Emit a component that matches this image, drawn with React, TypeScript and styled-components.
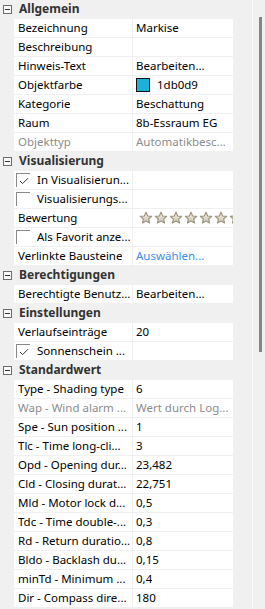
import React from 'react'
import styled, { createGlobalStyle } from 'styled-components'

type RowKind = 'text' | 'check' | 'color' | 'stars' | 'link'

type PropRow = {
  name: string
  value?: string
  kind?: RowKind
  checked?: boolean
  disabled?: boolean
}

type Section = {
  title: string
  rows: Array<PropRow>
}

const sections: Array<Section> = [
  {
    title: 'Allgemein',
    rows: [
      { name: 'Bezeichnung', value: 'Markise' },
      { name: 'Beschreibung', value: '' },
      { name: 'Hinweis-Text', value: 'Bearbeiten...' },
      { name: 'Objektfarbe', value: '1db0d9', kind: 'color' },
      { name: 'Kategorie', value: 'Beschattung' },
      { name: 'Raum', value: '8b-Essraum EG' },
      { name: 'Objekttyp', value: 'Automatikbesc...', disabled: true }
    ]
  },
  {
    title: 'Visualisierung',
    rows: [
      { name: 'In Visualisierun...', kind: 'check', checked: true },
      { name: 'Visualisierungs...', kind: 'check' },
      { name: 'Bewertung', kind: 'stars' },
      { name: 'Als Favorit anze...', kind: 'check' },
      { name: 'Verlinkte Bausteine', value: 'Auswählen...', kind: 'link' }
    ]
  },
  {
    title: 'Berechtigungen',
    rows: [{ name: 'Berechtigte Benutz...', value: 'Bearbeiten...' }]
  },
  {
    title: 'Einstellungen',
    rows: [
      { name: 'Verlaufseinträge', value: '20' },
      { name: 'Sonnenschein ...', kind: 'check', checked: true }
    ]
  },
  {
    title: 'Standardwert',
    rows: [
      { name: 'Type - Shading type', value: '6' },
      { name: 'Wap - Wind alarm ...', value: 'Wert durch Log...', disabled: true },
      { name: 'Spe - Sun position ...', value: '1' },
      { name: 'Tlc - Time long-cli...', value: '3' },
      { name: 'Opd - Opening dur...', value: '23,482' },
      { name: 'Cld - Closing durat...', value: '22,751' },
      { name: 'Mld - Motor lock d...', value: '0,5' },
      { name: 'Tdc - Time double-...', value: '0,3' },
      { name: 'Rd - Return duratio...', value: '0,8' },
      { name: 'Bldo - Backlash du...', value: '0,15' },
      { name: 'minTd - Minimum ...', value: '0,4' },
      { name: 'Dir - Compass dire...', value: '180' }
    ]
  }
]

const GlobalStyle = createGlobalStyle`
  html, body {
    margin: 0;
    padding: 0;
    overflow: hidden;
    background: #f0f0f0;
  }
  body {
    font-family: 'Noto Sans', 'Open Sans', sans-serif;
    font-size: 11.5px;
  }
`

const Star = () => (
  <svg width="14" height="14" viewBox="0 0 24 24">
    <defs>
      <linearGradient id="starFill" x1="0" y1="0" x2="0" y2="1">
        <stop offset="0" stopColor="#f4f1ea" />
        <stop offset="1" stopColor="#cbc2ae" />
      </linearGradient>
    </defs>
    <path
      d="M12 2.2l2.9 6.3 6.8.7-5.1 4.6 1.5 6.8L12 17.1l-6.1 3.5 1.5-6.8-5.1-4.6 6.8-.7z"
      fill="url(#starFill)"
      stroke="#9d9380"
      strokeWidth="2"
      strokeLinejoin="round"
    />
  </svg>
)

const CheckMark = () => (
  <svg width="10" height="8" viewBox="0 0 10 8">
    <polyline points="1,4 3.6,6.6 9,1.2" fill="none" stroke="#333" strokeWidth="1" />
  </svg>
)

const PropertyRowView: React.FunctionComponent<{ row: PropRow }> = ({ row }) => {
  const kind = row.kind || 'text'

  return (
    <PropertyRow>
      <RowGutter />
      <NameCell $disabled={row.disabled} $check={kind === 'check'}>
        {kind === 'check' && <CheckBox>{row.checked && <CheckMark />}</CheckBox>}
        <CellText>{row.name}</CellText>
      </NameCell>
      <ValueCell $disabled={row.disabled} $link={kind === 'link'}>
        {kind === 'color' && <ColorSwatch $color={`#${row.value}`} />}
        {kind === 'stars' ? (
          <StarRow>
            {Array.from({ length: 7 }).map((_, i) => (
              <Star key={i} />
            ))}
          </StarRow>
        ) : (
          <CellText>{row.value}</CellText>
        )}
      </ValueCell>
    </PropertyRow>
  )
}

const App = () => (
  <>
    <GlobalStyle />
    <Panel>
      <PropertyGrid>
        {sections.map(section => (
          <React.Fragment key={section.title}>
            <SectionHeader>
              <CollapseBox />
              <SectionTitle>{section.title}</SectionTitle>
            </SectionHeader>
            {section.rows.map(row => (
              <PropertyRowView key={row.name} row={row} />
            ))}
          </React.Fragment>
        ))}
      </PropertyGrid>
      <Scrollbar>
        <ScrollThumb />
      </Scrollbar>
    </Panel>
  </>
)

const Panel = styled.div`
  display: flex;
  height: 609px;
  overflow: hidden;
  background: #f0f0f0;
`

const PropertyGrid = styled.div`
  display: flex;
  flex-direction: column;
  gap: 1px;
  width: 234px;
  flex-shrink: 0;
`

const SectionHeader = styled.div`
  display: flex;
  align-items: center;
  height: 18px;
  padding-left: 3px;
  gap: 7px;
`

const CollapseBox = styled.span`
  position: relative;
  box-sizing: border-box;
  width: 9px;
  height: 9px;
  border: 1px solid #6d6d6d;
  background: #fbfbfb;
  &::after {
    content: '';
    position: absolute;
    left: 1px;
    right: 1px;
    top: 3px;
    height: 1px;
    background: #333;
  }
`

const SectionTitle = styled.span`
  font-size: 12px;
  font-weight: bold;
  color: #333;
  line-height: 18px;
`

const PropertyRow = styled.div`
  display: grid;
  grid-template-columns: 14px 119px 100px;
  height: 18px;
`

const RowGutter = styled.div`
  background: #f0f0f0;
`

const Cell = styled.div<{ $disabled?: boolean }>`
  display: flex;
  align-items: center;
  overflow: hidden;
  white-space: nowrap;
  background: #fff;
  color: ${p => (p.$disabled ? '#8c8c8c' : '#000')};
  line-height: 18px;
`

const NameCell = styled(Cell)<{ $check?: boolean }>`
  padding-left: ${p => (p.$check ? '2px' : '4px')};
  gap: 7px;
  border-right: 1px solid #f0f0f0;
`

const ValueCell = styled(Cell)<{ $link?: boolean }>`
  padding-left: 3px;
  color: ${p => (p.$link ? '#3a8ee6' : p.$disabled ? '#8c8c8c' : '#000')};
`

const CellText = styled.span`
  overflow: hidden;
  white-space: nowrap;
`

const CheckBox = styled.span`
  display: flex;
  align-items: center;
  justify-content: center;
  box-sizing: border-box;
  flex-shrink: 0;
  width: 14px;
  height: 14px;
  border-top: 1px solid #8a8a8a;
  border-left: 1px solid #8a8a8a;
  padding-top: 1px;
`

const ColorSwatch = styled.span<{ $color: string }>`
  box-sizing: border-box;
  flex-shrink: 0;
  width: 14px;
  height: 14px;
  margin-right: 7px;
  border: 1px solid #111;
  background: ${p => p.$color};
`

const StarRow = styled.div`
  display: flex;
  gap: 1px;
  padding-left: 3px;
`

const Scrollbar = styled.div`
  display: flex;
  flex-direction: column;
  align-items: center;
  margin-left: auto;
  width: 12px;
  border-left: 1px solid #fafafa;
  background: #f0f0f0;
`

const ScrollThumb = styled.div`
  width: 3px;
  height: 335px;
  margin-top: 17px;
  margin-left: 3px;
  background: #858585;
`

export default App
